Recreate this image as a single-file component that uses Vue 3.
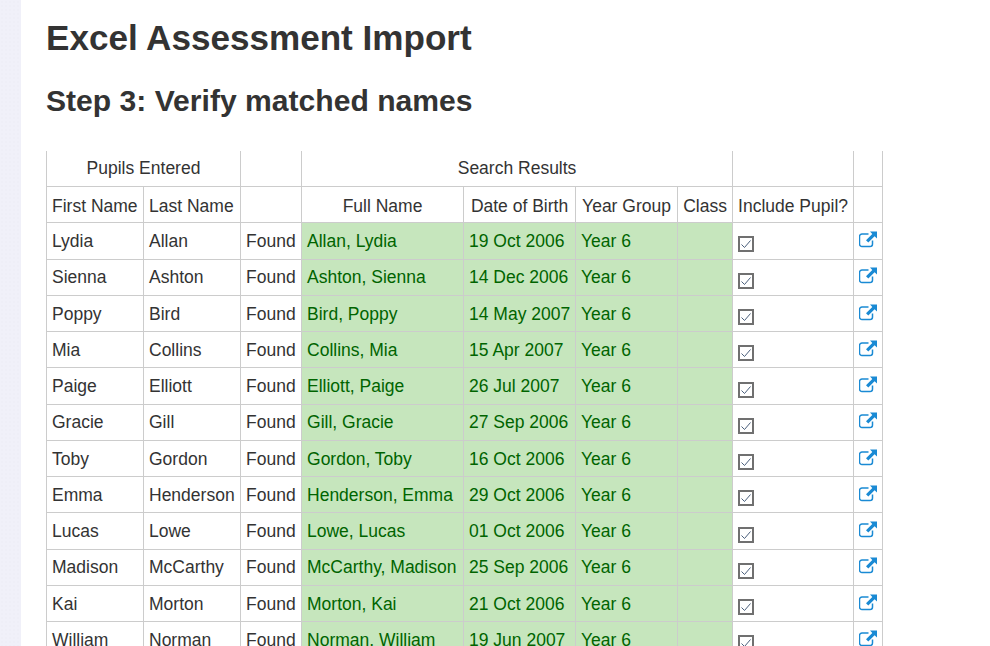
<script setup>
const rows = [
  ['Lydia', 'Allan', '19 Oct 2006'],
  ['Sienna', 'Ashton', '14 Dec 2006'],
  ['Poppy', 'Bird', '14 May 2007'],
  ['Mia', 'Collins', '15 Apr 2007'],
  ['Paige', 'Elliott', '26 Jul 2007'],
  ['Gracie', 'Gill', '27 Sep 2006'],
  ['Toby', 'Gordon', '16 Oct 2006'],
  ['Emma', 'Henderson', '29 Oct 2006'],
  ['Lucas', 'Lowe', '01 Oct 2006'],
  ['Madison', 'McCarthy', '25 Sep 2006'],
  ['Kai', 'Morton', '21 Oct 2006'],
  ['William', 'Norman', '19 Jun 2007'],
]
const widths = [97, 97, 61, 162, 112, 102, 55, 121, 29]
</script>

<template>
  <div class="page">
    <aside class="rail"></aside>
    <main class="content">
      <h1>Excel Assessment Import</h1>
      <h2>Step 3: Verify matched names</h2>
      <table>
        <colgroup>
          <col v-for="(w, i) in widths" :key="i" :style="{ width: w + 'px' }" />
        </colgroup>
        <thead>
          <tr class="group">
            <th colspan="2">Pupils Entered</th>
            <th></th>
            <th colspan="4">Search Results</th>
            <th></th>
            <th></th>
          </tr>
          <tr class="labels">
            <th class="left">First Name</th>
            <th class="left">Last Name</th>
            <th></th>
            <th>Full Name</th>
            <th>Date of Birth</th>
            <th>Year Group</th>
            <th>Class</th>
            <th>Include Pupil?</th>
            <th></th>
          </tr>
        </thead>
        <tbody>
          <tr v-for="r in rows" :key="r[1]">
            <td>{{ r[0] }}</td>
            <td>{{ r[1] }}</td>
            <td>Found</td>
            <td class="match">{{ r[1] }}, {{ r[0] }}</td>
            <td class="match">{{ r[2] }}</td>
            <td class="match">Year 6</td>
            <td class="match"></td>
            <td>
              <span class="check">
                <svg width="12" height="12" viewBox="0 0 12 12">
                  <path d="M1.5 6.5 L4.5 9.5 L10.5 2.5" fill="none" stroke="#4a5f7c" stroke-width="1" />
                </svg>
              </span>
            </td>
            <td class="link">
              <svg width="18" height="17" viewBox="0 0 18 17">
                <path d="M13.5 9.5 V13 a2.5 2.5 0 0 1 -2.5 2.5 H3 a2.5 2.5 0 0 1 -2.5 -2.5 V5.5 A2.5 2.5 0 0 1 3 3 h6.5" fill="none" stroke="#1a8ad4" stroke-width="1.5" />
                <path d="M11 0.5 H18 V7.5 L15.6 5.2 L9.3 11.4 L7 9.2 L13.3 2.9 Z" fill="#1a8ad4" />
              </svg>
            </td>
          </tr>
        </tbody>
      </table>
    </main>
  </div>
</template>

<style>
html, body { margin: 0; background: #fff; }
</style>

<style scoped>
.page {
  display: flex;
  height: 646px;
  overflow: hidden;
  font-family: "Liberation Sans", Arial, sans-serif;
  color: #333;
}
.rail {
  width: 21px;
  flex: none;
  background-color: #f0f0f9;
  background-image: radial-gradient(circle, #eeeef7 1px, transparent 1.2px);
  background-size: 4px 4px;
}
.content {
  padding-left: 25px;
  flex: 1;
}
h1 {
  margin: 16px 0 0;
  font-size: 35.1px;
  line-height: 44px;
  font-weight: 700;
}
h2 {
  margin: 23px 0 0;
  font-size: 30.1px;
  line-height: 36px;
  font-weight: 700;
}
table {
  margin-top: 32px;
  border-collapse: collapse;
  table-layout: fixed;
  width: 836px;
  font-size: 17.5px;
}
tr { height: 36.27px; }
tr.group { height: 35.6px; }
th, td {
  border: 1px solid #ccc;
  padding: 0 5px;
  font-weight: 400;
  white-space: nowrap;
  overflow: hidden;
}
thead tr:first-child th { border-top: none; }
tr.labels th { padding-top: 4px; }
td { padding-top: 1px; }
th { text-align: center; }
th.left, td { text-align: left; }
.match {
  background: #c6e6bd;
  color: #006400;
}
.check {
  display: block;
  width: 12px;
  height: 12px;
  margin-top: 6px;
  border: 2px solid #707070;
  background: #fff;
}
.check svg, .link svg { display: block; }
td.link { padding: 0 0 3px 5px; }
</style>
